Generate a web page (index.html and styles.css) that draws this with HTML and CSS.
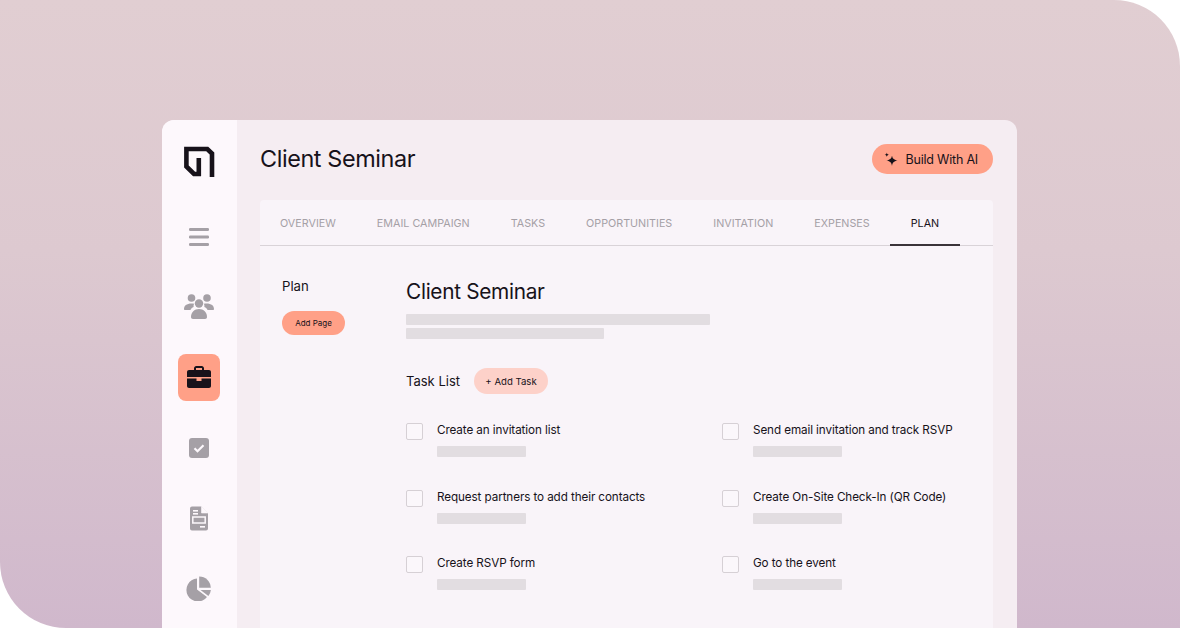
FILE: index.html
```html
<!DOCTYPE html>
<html lang="en">
<head>
  <meta charset="UTF-8">
  <meta name="viewport" content="width=device-width, initial-scale=1">
  <title>Client Seminar - Plan</title>
  <link rel="stylesheet" href="styles.css">
</head>
<body>

<div class="hero">
  <div class="window">

    <nav class="sidebar">
      <svg class="logo" width="32" height="32" viewBox="0 0 32 32" fill="none" stroke="#17121a" stroke-width="4.6">
        <path d="M29 31V7.500L24.300 3H3.400V20.500L11 28H15.800V12"/>
      </svg>
      <div class="nav-list">
        <div class="nav-item">
          <svg width="22" height="20" viewBox="0 0 22 20" fill="#a5a0a6"><rect x="1" y="1" width="20" height="3" rx="1.2"/><rect x="1" y="8.5" width="20" height="3" rx="1.2"/><rect x="1" y="16" width="20" height="3" rx="1.2"/></svg>
        </div>
        <div class="nav-item">
          <svg width="32" height="27" viewBox="0 0 32 27" fill="#a5a0a6">
            <circle cx="8.5" cy="5" r="3.8"/><circle cx="24" cy="5" r="3.8"/><circle cx="16" cy="10.5" r="4.2"/>
            <path d="M1 16c0-3.4 2.600-5.600 7.500-5.600 1 0 1.800.1 2.600.3-.5 1-.7 2-.5 3.200-1.500.6-2.600 1.600-3.100 3.100H2c-.6 0-1-.4-1-1z"/>
            <path d="M31 16c0-3.4-2.600-5.600-7.500-5.600-1 0-1.800.1-2.600.3.5 1 .7 2 .5 3.200 1.500.6 2.600 1.600 3.100 3.100H30c.6 0 1-.4 1-1z"/>
            <path d="M8 24c0-4.600 3.400-8 8-8s8 3.400 8 8c0 1.200-.8 2-2 2H10c-1.200 0-2-.8-2-2z"/>
          </svg>
        </div>
        <div class="nav-item active">
          <svg width="26" height="24" viewBox="0 0 26 24" fill="#17121a">
            <path d="M8 5V3.300C8 2 9 1 10.300 1h5.400C17 1 18 2 18 3.300V5h-2V3.300c0-.2-.1-.3-.3-.3h-5.400c-.2 0-.3.1-.3.3V5z"/>
            <path d="M3 5h20c1.100 0 2 .9 2 2v5H1V7c0-1.100.9-2 2-2z"/>
            <path d="M1 13.500h9.500V16h5v-2.500H25V21c0 1.100-.9 2-2 2H3c-1.100 0-2-.9-2-2z"/>
          </svg>
        </div>
        <div class="nav-item">
          <svg width="22" height="22" viewBox="0 0 22 22"><rect x="1" y="1" width="20" height="20" rx="3" fill="#a5a0a6"/><path d="M6.500 11.200l3 3 6-6" fill="none" stroke="#fdf8fc" stroke-width="2.200"/></svg>
        </div>
        <div class="nav-item">
          <svg width="20" height="25" viewBox="0 0 20 25">
            <path d="M3 .5h9.500L19 7v15.500a2 2 0 0 1-2 2H3a2 2 0 0 1-2-2v-20a2 2 0 0 1 2-2z" fill="#a5a0a6"/>
            <path d="M12.500 .5V7H19z" fill="#fdf8fc" stroke="#fdf8fc" stroke-width=".6"/>
            <rect x="4" y="4" width="5" height="1.600" fill="#fdf8fc"/>
            <rect x="4" y="7" width="5" height="1.600" fill="#fdf8fc"/>
            <rect x="3.800" y="11" width="12.400" height="6" fill="none" stroke="#fdf8fc" stroke-width="1.500"/>
            <rect x="11" y="20" width="5" height="1.600" fill="#fdf8fc"/>
          </svg>
        </div>
        <div class="nav-item">
          <svg width="26" height="25" viewBox="0 0 26 25" fill="#a5a0a6">
            <path d="M11 2.500A11.500 11.500 0 1 0 21 21L11 13.500z"/>
            <path d="M13.200 .6A11.500 11.500 0 0 1 24.800 11.800H13.200z"/>
            <path d="M14.500 14h10.400a11.500 11.500 0 0 1-2.500 6z"/>
          </svg>
        </div>
      </div>
    </nav>

    <main class="content">
      <header class="page-head">
        <h1>Client Seminar</h1>
        <button class="ai-button">
          <svg width="14" height="15" viewBox="0 0 14 15" fill="#17121a">
            <path d="M8 3.500c.5 3 1.600 4.200 5.500 5-3.900.8-5 2-5.500 5.500-.5-3.500-1.600-4.700-5.500-5.500 3.900-.8 5-2 5.500-5z"/>
            <path d="M2.800 .5c.2 1.500.7 2 2.200 2.300-1.500.3-2 .8-2.200 2.300C2.600 3.600 2.100 3.100.6 2.800 2.100 2.500 2.600 2 2.800 .5z"/>
          </svg>
          Build With AI
        </button>
      </header>

      <section class="card">
        <div class="tabs">
          <a class="tab">Overview</a>
          <a class="tab">Email Campaign</a>
          <a class="tab">Tasks</a>
          <a class="tab">Opportunities</a>
          <a class="tab">Invitation</a>
          <a class="tab">Expenses</a>
          <a class="tab active">Plan</a>
        </div>

        <div class="plan">
          <aside class="plan-side">
            <div class="plan-label">Plan</div>
            <button class="add-page">Add Page</button>
          </aside>

          <div class="plan-main">
            <h2>Client Seminar</h2>
            <div class="bar bar-long"></div>
            <div class="bar bar-mid"></div>

            <div class="task-head">
              <h3>Task List</h3>
              <button class="add-task">+ Add Task</button>
            </div>

            <div class="tasks">
              <div class="task"><span class="check"></span><div><p>Create an invitation list</p><div class="bar bar-short"></div></div></div>
              <div class="task"><span class="check"></span><div><p>Send email invitation and track RSVP</p><div class="bar bar-short"></div></div></div>
              <div class="task"><span class="check"></span><div><p>Request partners to add their contacts</p><div class="bar bar-short"></div></div></div>
              <div class="task"><span class="check"></span><div><p>Create On-Site Check-In (QR Code)</p><div class="bar bar-short"></div></div></div>
              <div class="task"><span class="check"></span><div><p>Create RSVP form</p><div class="bar bar-short"></div></div></div>
              <div class="task"><span class="check"></span><div><p>Go to the event</p><div class="bar bar-short"></div></div></div>
            </div>
          </div>
        </div>
      </section>
    </main>

  </div>
</div>

</body>
</html>
```

FILE: styles.css
```css
:root {
  --ink: #17121a;
  --muted: #a5a0a6;
  --coral: #ffa087;
  --sidebar: #fdf8fc;
  --main: #f5edf2;
  --card: #f9f4f9;
  --skeleton: #e2dde1;
}

* {
  box-sizing: border-box;
}

html, body {
  margin: 0;
  height: 100%;
  overflow: hidden;
  background-color: #ffffff;
}

body {
  font-family: Inter, "Liberation Sans", sans-serif;
  color: var(--ink);
}

.hero {
  height: 628px;
  padding: 120px 163px 0 162px;
  background: linear-gradient(180deg, #e1ced2 0%, #ddc9d0 40%, #d0b8cc 100%);
  border-radius: 0 66px 0 66px;
  overflow: hidden;
}

.window {
  display: flex;
  height: 508px;
  background-color: var(--main);
  border-radius: 12px 12px 0 0;
  overflow: hidden;
}

/* Sidebar */
.sidebar {
  flex: 0 0 75px;
  display: flex;
  flex-direction: column;
  align-items: center;
  padding: 26px 1px 0 0;
  background-color: var(--sidebar);
}

.nav-list {
  display: flex;
  flex-direction: column;
  gap: 23.4px;
  margin-top: 35px;
}

.nav-item {
  width: 42px;
  height: 47px;
  display: flex;
  align-items: center;
  justify-content: center;
  border-radius: 8px;
}

.nav-item.active {
  background-color: var(--coral);
}

/* Main */
.content {
  flex: 1;
  padding: 24px 24px 0 23px;
}

.page-head {
  display: flex;
  align-items: center;
  justify-content: space-between;
  height: 30px;
  margin-bottom: 26px;
}

h1 {
  margin: 0 0 2px;
  font-size: 23.400px;
  font-weight: 400;
  letter-spacing: -0.4px;
}

button {
  border: none;
  font-family: inherit;
  color: var(--ink);
}

.ai-button {
  display: flex;
  align-items: center;
  gap: 7px;
  height: 30px;
  padding: 0 15px 0 12px;
  font-size: 12.500px;
  letter-spacing: -0.2px;
  background-color: var(--coral);
  border-radius: 15px;
}

.card {
  height: 428px;
  background-color: var(--card);
  border-radius: 4px 4px 0 0;
}

.tabs {
  display: flex;
  height: 46px;
  border-bottom: 1px solid #d9d3d8;
}

.tab {
  display: flex;
  align-items: center;
  padding: 2px 20.500px 0;
  margin-bottom: -1px;
  font-size: 10.750px;
  text-transform: uppercase;
  color: var(--muted);
  border-bottom: 2px solid transparent;
}

.tab:first-child {
  padding-left: 20px;
}

.tab.active {
  color: var(--ink);
  border-bottom-color: #3a3439;
}

.plan {
  display: flex;
  padding: 31px 22px 0;
}

.plan-side {
  flex: 0 0 124px;
}

.plan-label {
  font-size: 13.200px;
  line-height: 18px;
  margin-bottom: 15px;
}

.add-page {
  width: 63px;
  height: 24px;
  padding: 0;
  font-size: 8px;
  background-color: var(--coral);
  border-radius: 12px;
}

.plan-main {
  flex: 1;
}

h2 {
  margin: 0 0 7px;
  font-size: 20.800px;
  line-height: 30px;
  font-weight: 400;
  letter-spacing: -0.3px;
}

.bar {
  height: 11px;
  background-color: var(--skeleton);
  border-radius: 1px;
}

.bar-long {
  width: 304px;
  margin-bottom: 3px;
}

.bar-mid {
  width: 198px;
}

.bar-short {
  width: 89px;
  margin-top: 7px;
}

.task-head {
  display: flex;
  align-items: center;
  gap: 14px;
  margin-top: 29px;
}

h3 {
  margin: 0;
  font-size: 13px;
  font-weight: 400;
}

.add-task {
  width: 74px;
  height: 26px;
  padding: 0;
  font-size: 9.600px;
  background-color: #fdd1c9;
  border-radius: 13px;
}

.tasks {
  display: grid;
  grid-template-columns: 316px 1fr;
  row-gap: 31.500px;
  margin-top: 28px;
}

.task {
  display: flex;
  gap: 14px;
}

.task p {
  margin: 0;
  font-size: 11.700px;
  line-height: 17px;
  letter-spacing: -0.1px;
  white-space: nowrap;
}

.check {
  flex: 0 0 17px;
  width: 17px;
  height: 17px;
  margin-top: 1px;
  background-color: #fbf7fb;
  border: 1px solid #d6d0d5;
  border-radius: 2px;
}
```
